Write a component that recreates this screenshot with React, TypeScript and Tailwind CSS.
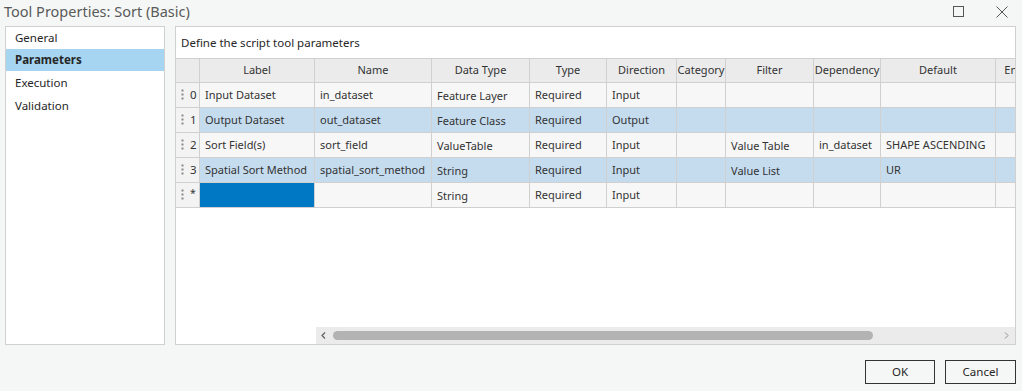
import React from "react";

const cols = [
  { name: "Label", w: 115 },
  { name: "Name", w: 117 },
  { name: "Data Type", w: 98 },
  { name: "Type", w: 77 },
  { name: "Direction", w: 70 },
  { name: "Category", w: 49 },
  { name: "Filter", w: 88 },
  { name: "Dependency", w: 67 },
  { name: "Default", w: 115 },
  { name: "Environment", w: 84 },
];

const rows = [
  { id: "0", sel: false, cells: ["Input Dataset", "in_dataset", "Feature Layer", "Required", "Input", "", "", "", "", ""] },
  { id: "1", sel: true, cells: ["Output Dataset", "out_dataset", "Feature Class", "Required", "Output", "", "", "", "", ""] },
  { id: "2", sel: false, cells: ["Sort Field(s)", "sort_field", "ValueTable", "Required", "Input", "", "Value Table", "in_dataset", "SHAPE ASCENDING", ""] },
  { id: "3", sel: true, cells: ["Spatial Sort Method", "spatial_sort_method", "String", "Required", "Input", "", "Value List", "", "UR", ""] },
  { id: "*", sel: false, cells: ["", "", "String", "Required", "Input", "", "", "", "", ""] },
];

const lowered = new Set([2, 6]);

function Grip() {
  return (
    <svg width="3" height="12" viewBox="0 0 3 12" className="shrink-0">
      <rect x="0.5" y="0.5" width="2" height="2" fill="#8a8a8a" />
      <rect x="0.5" y="4.5" width="2" height="2" fill="#8a8a8a" />
      <rect x="0.5" y="8.5" width="2" height="2" fill="#8a8a8a" />
    </svg>
  );
}

export default function App() {
  return (
    <div
      className="w-[1022px] h-[391px] bg-[#f5f7f7] flex flex-col overflow-hidden text-[#262626]"
      style={{ fontFamily: '"Noto Sans", "Open Sans", sans-serif' }}
    >
      {/* title bar */}
      <div className="h-[26px] flex items-center justify-between pl-[4px] pr-[14px]">
        <div className="text-[14.5px] text-[#5a5a5a] leading-none -mt-[3px]">Tool Properties: Sort (Basic)</div>
        <div className="flex items-center gap-[32px] -mt-[3px]">
          <svg width="11" height="11" viewBox="0 0 11 11">
            <rect x="0.5" y="0.5" width="10" height="10" fill="none" stroke="#555" strokeWidth="1" />
          </svg>
          <svg width="12" height="12" viewBox="0 0 12 12">
            <path d="M0.5 0.5 L11.5 11.5 M11.5 0.5 L0.5 11.5" stroke="#555" strokeWidth="1" />
          </svg>
        </div>
      </div>

      {/* main area */}
      <div className="flex pl-[5px] gap-[10px] h-[319px]">
        {/* nav */}
        <div className="w-[160px] h-full border border-[#d0d0d0] bg-white text-[11.5px]">
          <div className="h-[22px] flex items-center pl-[9px]">General</div>
          <div className="h-[22px] flex items-center pl-[9px] bg-[#a6d5f2] font-bold">Parameters</div>
          <div className="h-[23px] flex items-center pl-[9px]">Execution</div>
          <div className="h-[23px] flex items-center pl-[9px]">Validation</div>
        </div>

        {/* right panel */}
        <div className="w-[841px] h-full border border-[#d0d0d0] bg-white flex flex-col overflow-hidden">
          <div className="h-[31px] flex items-center pl-[5px] text-[11.5px] text-[#262626]">
            Define the script tool parameters
          </div>
          <div className="flex-1 overflow-hidden text-[11px]">
            {/* header */}
            <div className="flex h-[25px] border-t border-b border-[#d0d0d0] bg-[#ebebeb] w-max">
              <div className="w-[24px] shrink-0 border-r border-[#d0d0d0]" />
              {cols.map((c) => (
                <div
                  key={c.name}
                  className="shrink-0 border-r border-[#d0d0d0] flex items-center justify-center whitespace-nowrap overflow-hidden text-[#333]"
                  style={{ width: c.w }}
                >
                  {c.name}
                </div>
              ))}
            </div>
            {rows.map((r) => (
              <div key={r.id} className="flex h-[25px] border-b border-[#d0d0d0] w-max">
                <div className="w-[24px] shrink-0 border-r border-[#d0d0d0] bg-[#f3f3f3] flex items-center pl-[5px] gap-[6px] text-[#333] text-[11.5px]">
                  <Grip />
                  <span className={r.id === "*" ? "text-[10.5px] -mt-[2px]" : ""}>{r.id}</span>
                </div>
                {r.cells.map((cell, i) => {
                  const blue = r.id === "*" && i === 0;
                  const bg = blue ? "bg-[#0078c4]" : r.sel ? "bg-[#c5dcef]" : "bg-[#f7f7f7]";
                  return (
                    <div
                      key={i}
                      className={`shrink-0 border-r border-[#d0d0d0] flex items-center pl-[5px] whitespace-nowrap overflow-hidden text-[#333] ${bg}`}
                      style={{ width: cols[i].w }}
                    >
                      <span className={lowered.has(i) ? "mt-[2px]" : ""}>{cell}</span>
                    </div>
                  );
                })}
              </div>
            ))}
          </div>
          {/* scrollbar */}
          <div className="h-[17px] flex">
            <div className="w-[140px] shrink-0 bg-white" />
            <div className="flex-1 bg-[#ebebeb] flex items-center">
              <svg width="17" height="17" viewBox="0 0 17 17" className="shrink-0">
                <path d="M9 5.5 L6 8.5 L9 11.5" fill="none" stroke="#606060" strokeWidth="1.2" />
              </svg>
              <div className="w-[540px] h-[9px] rounded-full bg-[#b3b3b3]" />
              <div className="flex-1" />
              <svg width="17" height="17" viewBox="0 0 17 17" className="shrink-0">
                <path d="M7 5.5 L10 8.5 L7 11.5" fill="none" stroke="#909090" strokeWidth="1" />
              </svg>
            </div>
          </div>
        </div>
      </div>

      {/* buttons */}
      <div className="flex justify-end gap-[10px] pr-[6px] pt-[15px]">
        <button className="w-[70px] h-[24px] border border-[#333] bg-[#f5f7f7] text-[11.5px] text-[#262626] flex items-center justify-center">
          OK
        </button>
        <button className="w-[71px] h-[24px] border border-[#333] bg-[#f5f7f7] text-[11.5px] text-[#262626] flex items-center justify-center">
          Cancel
        </button>
      </div>
    </div>
  );
}
